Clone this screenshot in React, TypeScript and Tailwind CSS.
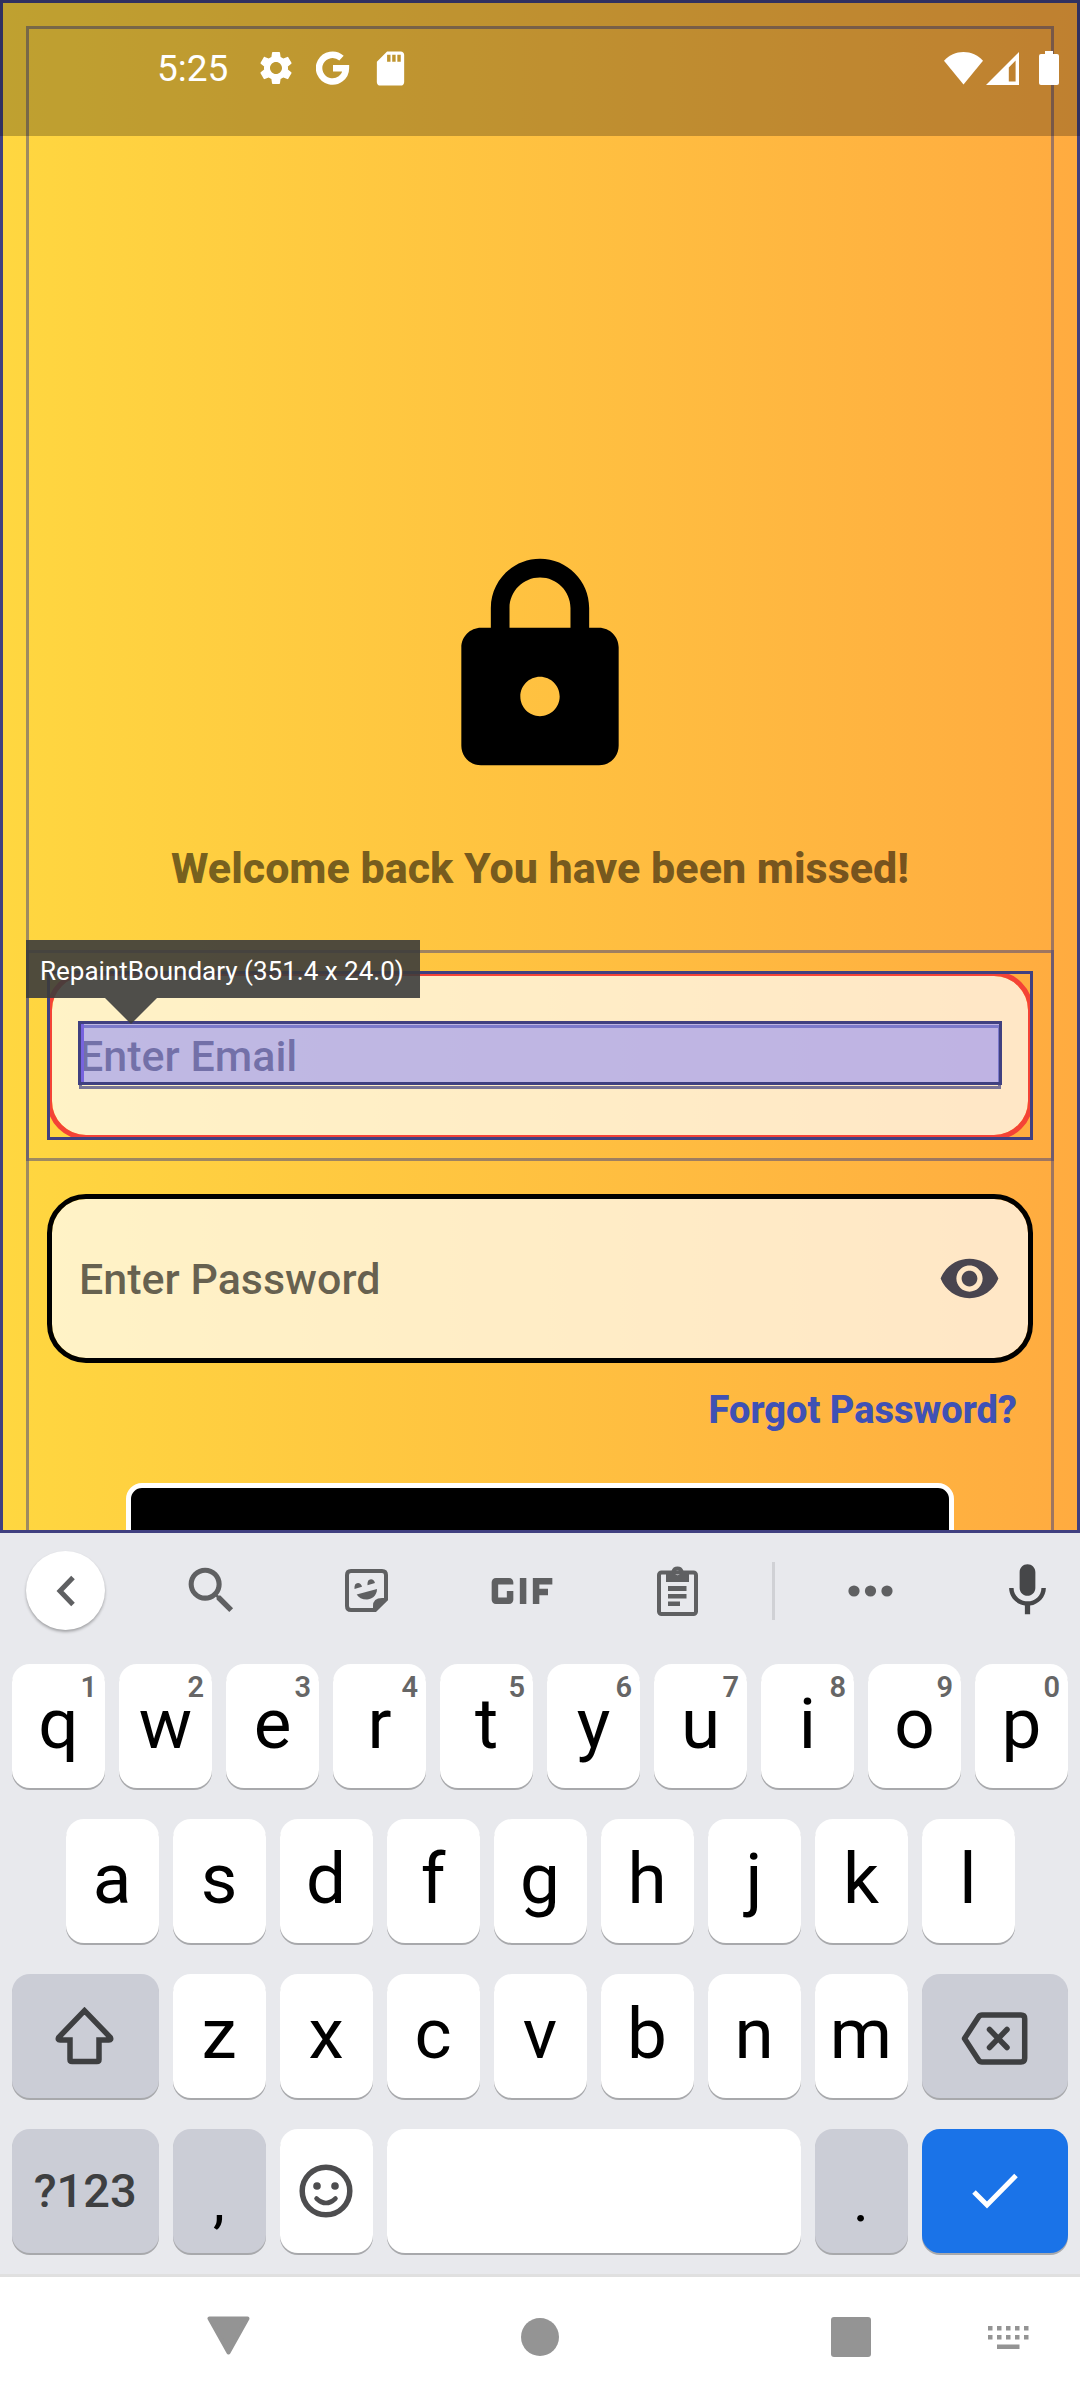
import type { ReactNode } from 'react';
import { MdGif, MdLock, MdMic, MdSdCard, MdSearch, MdSettings, MdVisibility } from 'react-icons/md';

function GoogleLogo() {
  return (
    <svg width="34" height="34" viewBox="0 0 34 34" fill="none" stroke="currentColor" strokeWidth="6.500" aria-hidden="true">
      <path d="M25.500 7.200A13.400 13.400 0 1 0 29.900 17.200H17" />
    </svg>
  );
}

function WifiIcon() {
  return (
    <svg width="39" height="33" viewBox="0 0 39 33" fill="currentColor" aria-hidden="true">
      <path d="M0 8.7C5 3 12 0 19.5 0S34 3 39 8.7L19.5 32.5Z" />
    </svg>
  );
}

function SignalIcon() {
  return (
    <svg width="33" height="33" viewBox="0 0 33 33" fill="currentColor" aria-hidden="true">
      <path fillRule="evenodd" d="M33 0V33H0ZM22.8 15.5V29.5H29.6V8.6Z" />
    </svg>
  );
}

function BatteryIcon() {
  return (
    <svg width="20" height="34" viewBox="0 0 20 34" fill="currentColor" aria-hidden="true">
      <rect x="6" width="8" height="6" />
      <rect y="3" width="20" height="31" rx="2" />
    </svg>
  );
}

function ChevronIcon() {
  return (
    <svg width="20" height="32" viewBox="0 0 20 32" fill="none" stroke="currentColor" strokeWidth="5" aria-hidden="true">
      <path d="M17 2.500L4 16L17 29.500" />
    </svg>
  );
}

function StickerIcon() {
  return (
    <svg width="43" height="43" viewBox="0 0 43 43" fill="currentColor" aria-hidden="true">
      <path
        d="M41 30V6Q41 2 37 2H6Q2 2 2 6V37Q2 41 6 41H30Z"
        fill="none"
        stroke="currentColor"
        strokeWidth="4"
        strokeLinejoin="round"
      />
      <path d="M43 29H37Q28 29 28 37V43H30.500L43 31Z" />
      <path d="M9.500 20Q9 14 13 14Q16 14 17 17.800Z" />
      <path d="M22.500 16.200Q22 10.200 26 10.200Q29 10.200 30 14Z" />
      <path d="M11.700 25.500L32 20C32 27 26 30.500 22 30.500C17 30.500 13.500 28.500 11.700 25.500Z" />
    </svg>
  );
}

function ClipboardIcon() {
  return (
    <svg width="41" height="50" viewBox="0 0 41 50" fill="currentColor" aria-hidden="true">
      <rect x="2" y="6.500" width="37" height="41.500" rx="2.500" fill="none" stroke="currentColor" strokeWidth="4" />
      <path
        fillRule="evenodd"
        d="M9 5H14.500A6.300 6.300 0 0 1 26.500 5H32V16H9ZM20.500 4.600a2.300 2.300 0 1 0 0 4.600a2.300 2.300 0 1 0 0-4.600Z"
      />
      <path d="M11 20H29.500V25H11ZM11 28H29.500V32.500H11ZM11 35.500H23V40H11Z" />
    </svg>
  );
}

function DotsIcon() {
  return (
    <svg width="45" height="12" viewBox="0 0 45 12" fill="currentColor" aria-hidden="true">
      <circle cx="6" cy="6" r="5.600" />
      <circle cx="22.500" cy="6" r="5.600" />
      <circle cx="39" cy="6" r="5.600" />
    </svg>
  );
}

function ShiftIcon() {
  return (
    <svg width="60" height="58" viewBox="0 0 60 58" fill="none" stroke="currentColor" strokeWidth="5.500" aria-hidden="true">
      <path d="M29.500 3.700L3.600 30.500Q2.500 33 5 33H15V52.500Q15 54.500 17 54.500H42Q44 54.500 44 52.500V33H54Q56.500 33 55.400 30.500Z" />
    </svg>
  );
}

function BackspaceIcon() {
  return (
    <svg
      width="67"
      height="53"
      viewBox="0 0 67 53"
      fill="none"
      stroke="currentColor"
      strokeWidth="5.500"
      strokeLinecap="round"
      strokeLinejoin="round"
      aria-hidden="true"
    >
      <path d="M3.500 26.500L17.500 5Q18.800 3 21 3H60Q63.700 3 63.700 6.700V46.300Q63.700 50 60 50H21Q18.800 50 17.500 48Z" />
      <path d="M28.500 17.500L46 35.500M46 17.500L28.500 35.500" />
    </svg>
  );
}

function SmileIcon() {
  return (
    <svg width="54" height="54" viewBox="0 0 54 54" fill="none" stroke="currentColor" aria-hidden="true">
      <circle cx="27" cy="27" r="23.800" strokeWidth="5.500" />
      <circle cx="18" cy="22" r="3.800" fill="currentColor" stroke="none" />
      <circle cx="36" cy="22" r="3.800" fill="currentColor" stroke="none" />
      <path d="M17.500 34.500Q27 43.500 36.500 34.500" strokeWidth="4.500" strokeLinecap="round" />
    </svg>
  );
}

function CheckIcon() {
  return (
    <svg width="46" height="36" viewBox="0 0 46 36" fill="none" stroke="currentColor" strokeWidth="5" aria-hidden="true">
      <path d="M2 19L15 32L44 2.500" />
    </svg>
  );
}

function KeyboardSwitchIcon() {
  return (
    <svg width="41" height="23" viewBox="0 0 41 23" fill="currentColor" aria-hidden="true">
      {[0, 9, 18, 27, 36].map((x) => (
        <g key={x}>
          <rect x={x} width="4.500" height="4.500" />
          <rect x={x} y="9" width="4.500" height="4.500" />
        </g>
      ))}
      <rect x="9" y="18.500" width="22.500" height="4.500" />
    </svg>
  );
}

function StatusBar() {
  return (
    <header className="relative z-20 flex h-34 items-center justify-between bg-black/25 pr-[21px] pl-[157px] text-white">
      <div className="flex items-center">
        <time className="pt-0.5 text-[37px] leading-[44px]">5:25</time>
        <div className="ml-7 flex items-center gap-5">
          <MdSettings size={40} />
          <GoogleLogo />
          <MdSdCard size={41} />
        </div>
      </div>
      <div className="flex items-center">
        <WifiIcon />
        <span className="ml-[3px]">
          <SignalIcon />
        </span>
        <span className="ml-5">
          <BatteryIcon />
        </span>
      </div>
    </header>
  );
}

function InspectorOverlay() {
  return (
    <div className="pointer-events-none absolute inset-0" aria-hidden="true">
      <div className="absolute -inset-x-[21px] -inset-y-[21px] border-3 border-[#404080]/50" />
      <div className="absolute inset-0 border-3 border-[#404080]" />
      <div className="absolute inset-x-[32px] top-[54px] h-16 border-3 border-[#404080]/70" />
      <div className="absolute inset-x-[31px] top-[50px] h-16 border-3 border-[#404080] bg-[#8080ff]/50" />
      <div className="absolute top-[53px] left-[34px] h-[58px] w-[3px] bg-[#7763df]" />
      <div className="absolute -top-[31px] -left-[21px] flex h-[58px] items-center bg-[#3c3c3c]/90 pt-1 pr-4 pl-3.5 text-[26px] leading-8 whitespace-nowrap text-white">
        RepaintBoundary (351.4 x 24.0)
      </div>
      <svg className="absolute top-[27px] left-[58px]" width="52" height="26" viewBox="0 0 52 26">
        <path d="M0 0H52L26 26Z" fill="#3c3c3c" fillOpacity="0.9" />
      </svg>
    </div>
  );
}

function LoginScreen() {
  return (
    <section className="relative min-h-0 flex-1 overflow-hidden bg-linear-to-r from-[#ffd740] to-[#ffab40]">
      <div className="pointer-events-none absolute inset-0 z-10 border-3 border-[#404080]" />
      <div className="pointer-events-none absolute inset-x-[26px] top-[26px] bottom-0 border-x-3 border-t-3 border-[#404080]/50" />
      <StatusBar />
      <form className="flex flex-col px-[47px] pt-[413px]" onSubmit={(e) => e.preventDefault()}>
        <MdLock size={236} className="self-center text-black" />
        <h1 className="mt-[58px] text-center text-[43px] leading-[50px] font-extrabold text-black/55">
          Welcome back You have been missed!
        </h1>
        <div className="relative mt-[78px]">
          <input
            type="email"
            aria-label="Enter Email"
            placeholder="Enter Email"
            className="block h-[169px] w-full rounded-[39px] border-5 border-[#f44336] bg-white/70 bg-clip-padding px-[27px] text-[43px] font-medium outline-none placeholder:text-black/60"
          />
          <InspectorOverlay />
        </div>
        <div className="mt-[54px] flex h-[169px] items-center rounded-[39px] border-5 border-black bg-white/70 bg-clip-padding px-[27px]">
          <input
            type="password"
            aria-label="Enter Password"
            placeholder="Enter Password"
            className="min-w-0 flex-1 bg-transparent pt-0.5 text-[43px] font-medium outline-none placeholder:text-black/60"
          />
          <button type="button" aria-label="Show password" className="text-[#49454f]">
            <MdVisibility size={63} />
          </button>
        </div>
        <a href="#forgot" className="mt-[26px] mr-4 self-end text-[38px] leading-[42px] font-extrabold text-[#3f51b5]">
          Forgot Password?
        </a>
        <button
          type="submit"
          aria-label="Sign in"
          className="mx-[79px] mt-[52px] h-[168px] rounded-[16px] border-5 border-white bg-black"
        />
      </form>
    </section>
  );
}

function Tool({ label, children }: { label: string; children: ReactNode }) {
  return (
    <button type="button" aria-label={label} className="flex h-full flex-1 items-center justify-center text-[#5f6062]">
      {children}
    </button>
  );
}

function Toolbar() {
  return (
    <div className="flex h-[115px] items-center">
      <div className="w-[134px] shrink-0 pl-[26px]">
        <button
          type="button"
          aria-label="Back"
          className="flex size-[79px] items-center justify-center rounded-full bg-white text-[#5f6062] shadow-[0_2px_3px_rgba(0,0,0,0.3)]"
        >
          <ChevronIcon />
        </button>
      </div>
      <Tool label="Search">
        <MdSearch size={61} />
      </Tool>
      <Tool label="Stickers">
        <StickerIcon />
      </Tool>
      <Tool label="GIF">
        <MdGif size={104} />
      </Tool>
      <Tool label="Clipboard">
        <ClipboardIcon />
      </Tool>
      <div className="ml-[17px] h-[58px] w-[3px] bg-[#d0d1d5]" />
      <button type="button" aria-label="More" className="flex h-full w-[190px] items-center justify-center text-[#5f6062]">
        <DotsIcon />
      </button>
      <button
        type="button"
        aria-label="Voice input"
        className="ml-2.5 flex h-full w-[105px] items-center justify-center text-[#464749]"
      >
        <MdMic size={63} />
      </button>
    </div>
  );
}

const keyBase = 'relative flex h-31 items-center justify-center rounded-[18px] shadow-[0_2px_0_#a8a9ac]';

function LetterKey({ letter, hint, className = 'col-span-2' }: { letter: string; hint?: string; className?: string }) {
  return (
    <button type="button" className={`${keyBase} bg-white pb-1 text-[71px] leading-[84px] text-black ${className}`}>
      {letter}
      {hint && (
        <span className="absolute top-1.5 right-2 text-[29px] leading-[34px] font-semibold text-[#666]">{hint}</span>
      )}
    </button>
  );
}

function Keyboard() {
  return (
    <section aria-label="Keyboard" className="border-b-3 border-[#e0e0e0] bg-[#e8e9ed] pb-[21px]">
      <Toolbar />
      <div className="mt-4 grid grid-cols-20 gap-x-3.5 gap-y-[31px] px-3">
        {[...'qwertyuiop'].map((letter, i) => (
          <LetterKey key={letter} letter={letter} hint={String((i + 1) % 10)} />
        ))}
        {[...'asdfghjkl'].map((letter, i) => (
          <LetterKey key={letter} letter={letter} className={i === 0 ? 'col-span-2 col-start-2' : 'col-span-2'} />
        ))}
        <button type="button" aria-label="Shift" className={`${keyBase} col-span-3 col-start-1 bg-[#cbcdd6] text-[#3e3f41]`}>
          <ShiftIcon />
        </button>
        {[...'zxcvbnm'].map((letter) => (
          <LetterKey key={letter} letter={letter} />
        ))}
        <button type="button" aria-label="Backspace" className={`${keyBase} col-span-3 bg-[#cbcdd6] pt-1 text-[#3e3f41]`}>
          <BackspaceIcon />
        </button>
        <button
          type="button"
          className={`${keyBase} col-span-3 bg-[#cbcdd6] text-[47px] leading-[54px] font-medium text-[#3e3f41]`}
        >
          ?123
        </button>
        <button type="button" className={`${keyBase} col-span-2 bg-[#cbcdd6] pt-5 text-[60px] leading-[70px] text-black`}>
          ,
        </button>
        <button type="button" aria-label="Emoji" className={`${keyBase} col-span-2 bg-white text-[#4d4d4f]`}>
          <SmileIcon />
        </button>
        <button type="button" aria-label="Space" className={`${keyBase} col-span-8 bg-white`} />
        <button type="button" className={`${keyBase} col-span-2 bg-[#cbcdd6] pt-5 text-[60px] leading-[70px] text-black`}>
          .
        </button>
        <button type="button" aria-label="Done" className={`${keyBase} col-span-3 bg-[#1a73e8] text-white`}>
          <CheckIcon />
        </button>
      </div>
    </section>
  );
}

function NavigationBar() {
  return (
    <nav className="grid h-[123px] grid-cols-[456fr_168fr_141fr_172fr_143fr] place-items-center bg-white pb-[3px] text-[#949494]">
      <button type="button" aria-label="Hide keyboard" className="pb-1">
        <svg width="43" height="39" viewBox="0 0 43 39" fill="currentColor" stroke="currentColor" strokeWidth="4" strokeLinejoin="round">
          <path d="M2.500 2.500H40.500L21.500 36.500Z" />
        </svg>
      </button>
      <button type="button" aria-label="Home" className="size-[38px] rounded-full bg-[#949494]" />
      <span />
      <button type="button" aria-label="Recent apps" className="size-10 rounded-[3px] bg-[#949494]" />
      <button type="button" aria-label="Switch keyboard">
        <KeyboardSwitchIcon />
      </button>
    </nav>
  );
}

export default function App() {
  return (
    <main className="flex h-screen flex-col overflow-hidden font-[Roboto,sans-serif]">
      <LoginScreen />
      <Keyboard />
      <NavigationBar />
    </main>
  );
}
